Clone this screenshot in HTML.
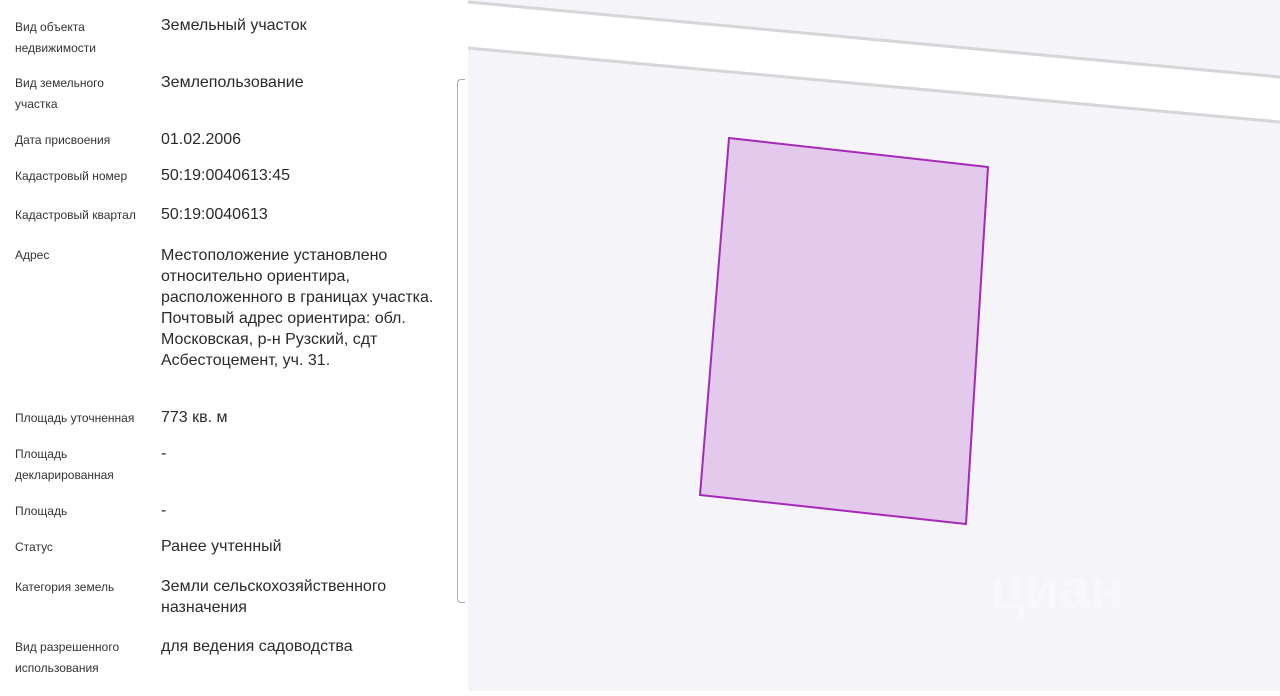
<!DOCTYPE html>
<html><head><meta charset="utf-8"><style>
body{margin:0;width:1280px;height:691px;overflow:hidden;background:#fff;font-family:"Liberation Sans","DejaVu Sans",sans-serif;position:relative}
.l{position:absolute;left:15px;font-size:12px;line-height:21px;color:#333}
.v{position:absolute;left:161px;font-size:16px;line-height:21px;color:#2a2a2a;width:292px}
#map{position:absolute;left:468px;top:0;width:812px;height:691px;background:#f4f4f9}
#sb{position:absolute;left:457px;top:79px;width:7px;height:522px;border:1px solid #aaa;border-right:none;border-radius:4px 0 0 4px}
</style></head><body>
<div id="map"><svg width="812" height="691" viewBox="468 0 812 691">
<polygon points="468,2 1280,77 1280,122 468,48" fill="#fff"/>
<line x1="468" y1="2" x2="1280" y2="77" stroke="#d6d6d8" stroke-width="3"/>
<line x1="468" y1="48" x2="1280" y2="122" stroke="#d6d6d8" stroke-width="3"/>
<polygon points="729,138 988,167 966,524 700,495" fill="#e3c9ec" stroke="#a52ab8" stroke-width="2"/>
<text x="990" y="608" font-family="Liberation Sans" font-size="56" font-weight="bold" fill="#f8f8fb">циан</text>
</svg></div>
<div id="sb"></div>
<div class="l" style="top:17px">Вид объекта<br>недвижимости</div>
<div class="v" style="top:15px">Земельный участок</div>
<div class="l" style="top:73px">Вид земельного<br>участка</div>
<div class="v" style="top:72px">Землепользование</div>
<div class="l" style="top:130px">Дата присвоения</div>
<div class="v" style="top:129px">01.02.2006</div>
<div class="l" style="top:166px">Кадастровый номер</div>
<div class="v" style="top:165px">50:19:0040613:45</div>
<div class="l" style="top:205px">Кадастровый квартал</div>
<div class="v" style="top:204px">50:19:0040613</div>
<div class="l" style="top:245px">Адрес</div>
<div class="v" style="top:245px">Местоположение установлено относительно ориентира, расположенного в границах участка. Почтовый адрес ориентира: обл. Московская, р-н Рузский, сдт Асбестоцемент, уч. 31.</div>
<div class="l" style="top:408px">Площадь уточненная</div>
<div class="v" style="top:407px">773 кв. м</div>
<div class="l" style="top:444px">Площадь<br>декларированная</div>
<div class="v" style="top:443px">-</div>
<div class="l" style="top:501px">Площадь</div>
<div class="v" style="top:500px">-</div>
<div class="l" style="top:537px">Статус</div>
<div class="v" style="top:536px">Ранее учтенный</div>
<div class="l" style="top:577px">Категория земель</div>
<div class="v" style="top:576px">Земли сельскохозяйственного назначения</div>
<div class="l" style="top:637px">Вид разрешенного<br>использования</div>
<div class="v" style="top:636px">для ведения садоводства</div>
</body></html>
